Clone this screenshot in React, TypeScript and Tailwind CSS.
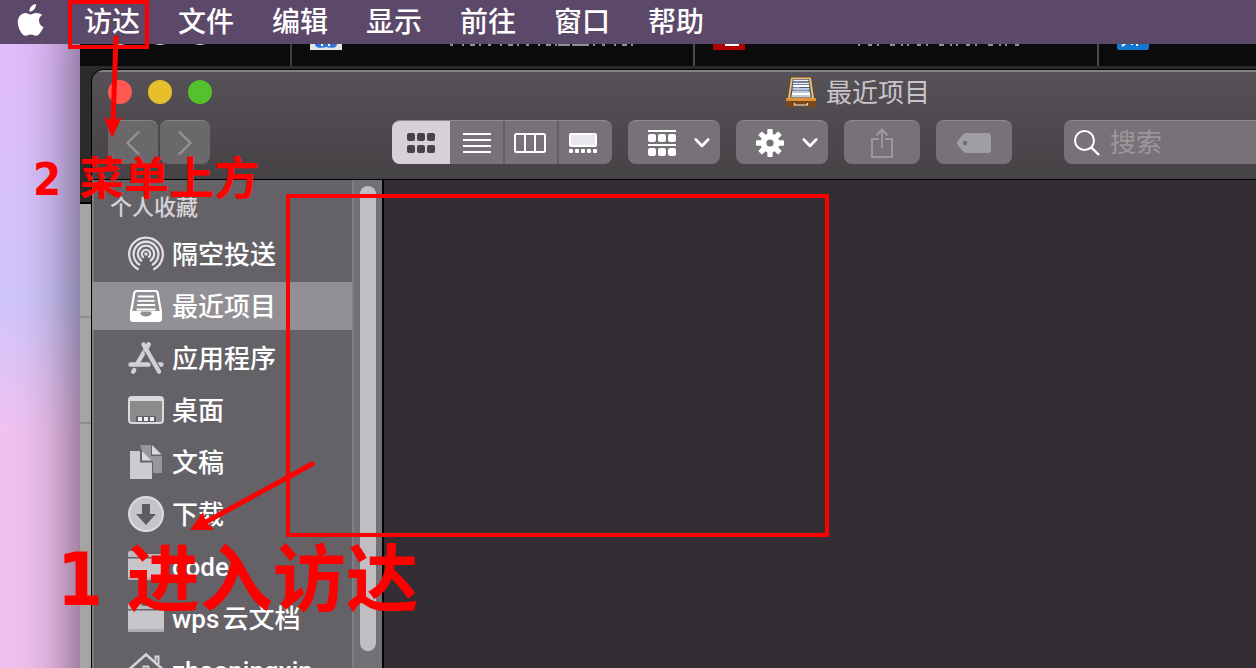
import React from 'react';

type IconProps = { className?: string };

const AppleLogo = () => (
    <svg className="h-8 w-7" viewBox="0 0 28 32" fill="white">
        <path d="M18.9 0c.2 2-.6 3.900-1.700 5.300-1.200 1.400-3 2.400-4.800 2.300-.2-1.900.7-3.900 1.800-5.100C15.300 1.100 17.300.1 18.900 0z" />
        <path d="M25.200 11.100c-2 1.300-3.200 3.100-3.200 5.600 0 3 1.800 5.200 4.400 6.200-.6 1.800-1.500 3.600-2.700 5.200-1.400 2.100-2.800 3.700-4.900 3.700-2 0-2.600-1.200-5-1.200-2.300 0-3.100 1.200-5 1.200-2.200 0-3.600-1.800-5-3.900C2.100 25.500.8 21.900.8 18.300c0-5.700 3.700-9.300 7.600-9.300 2.100 0 3.800 1.400 5.100 1.400 1.200 0 3.200-1.500 5.600-1.500 2.600 0 4.700.9 6.100 2.200z" />
    </svg>
);

const GridIcon = () => (
    <svg className="h-5 w-7" viewBox="0 0 28 20" fill="#474347">
        {[0, 12].map((y) => [0, 10, 20].map((x) => <rect key={`${x}-${y}`} x={x} y={y} width="8" height="8" rx="2" />))}
    </svg>
);

const ListIcon = () => (
    <svg className="h-5 w-7" viewBox="0 0 28 20" fill="white">
        {[0, 6, 12, 18].map((y) => <rect key={y} y={y} width="28" height="2" />)}
    </svg>
);

const ColumnsIcon = () => (
    <svg className="h-5 w-8" viewBox="0 0 32 20" fill="none" stroke="white" strokeWidth="2">
        <rect x="1" y="1" width="30" height="18" rx="1.500" />
        <path d="M11 1v18M21 1v18" />
    </svg>
);

const GalleryIcon = () => (
    <svg className="h-5 w-7" viewBox="0 0 28 20" fill="white">
        <rect x="1" y="1" width="26" height="12" rx="1" fill="#ebe8ed" stroke="white" strokeWidth="2" />
        {[0, 6, 12, 18, 24].map((x) => <rect key={x} x={x} y="16" width="4" height="4" rx="1" />)}
    </svg>
);

const ArrangeIcon = () => (
    <svg className="h-[26px] w-7" viewBox="0 0 28 26" fill="white">
        <rect width="28" height="2" />
        <rect y="14" width="28" height="2" />
        {[4, 18].map((y) => [0, 10, 20].map((x) => <rect key={`${x}-${y}`} x={x} y={y} width="8" height="8" rx="2" />))}
    </svg>
);

const GearIcon = () => (
    <svg className="size-7" viewBox="0 0 28 28" fill="white">
        {[0, 45, 90, 135].map((angle) => (
            <rect key={angle} x="11.300" y="0" width="5.400" height="28" rx="1" transform={`rotate(${angle} 14 14)`} />
        ))}
        <circle cx="14" cy="14" r="9.500" />
        <circle cx="14" cy="14" r="3.600" fill="#767277" />
    </svg>
);

const ChevronDown = () => (
    <svg className="h-[10px] w-4" viewBox="0 0 16 10" fill="none" stroke="white" strokeWidth="2.600" strokeLinecap="round" strokeLinejoin="round">
        <path d="M1.800 1.500 8 8l6.200-6.500" />
    </svg>
);

const BackIcon = () => (
    <svg className="h-6 w-[14px]" viewBox="0 0 14 24" fill="none" stroke="#939094" strokeWidth="2.400" strokeLinecap="round">
        <path d="M12.500 1.200 1.500 12l11 10.800" />
    </svg>
);

const ForwardIcon = () => (
    <svg className="h-6 w-[14px]" viewBox="0 0 14 24" fill="none" stroke="#939094" strokeWidth="2.400" strokeLinecap="round">
        <path d="M1.500 1.200 12.500 12l-11 10.800" />
    </svg>
);

const ShareIcon = () => (
    <svg className="h-[30px] w-[22px]" viewBox="0 0 22 30" fill="none" stroke="#9b989d" strokeWidth="2">
        <path d="M8 11H1v18h20V11h-7M11 20V2M5.500 7.500 11 1.500l5.500 6" />
    </svg>
);

const TagIcon = () => (
    <svg className="h-5 w-[34px]" viewBox="0 0 34 20" fill="#a19ea3">
        <path d="M10 0h21a3 3 0 0 1 3 3v14a3 3 0 0 1-3 3H10c-2 0-3-.7-4.500-2.200L1 12.500c-1.300-1.500-1.300-3.500 0-5l4.500-5.300C7 .7 8 0 10 0z" />
        <circle cx="8" cy="10" r="2.200" fill="#6d6a6e" />
    </svg>
);

const SearchIcon = () => (
    <svg className="size-[26px] shrink-0" viewBox="0 0 26 26" fill="none" stroke="white" strokeWidth="2">
        <circle cx="10.500" cy="10.500" r="9.500" />
        <path d="m17.300 17.300 7.700 7.700" strokeWidth="2.400" />
    </svg>
);

const DrawerIcon = () => (
    <svg className="h-[30px] w-[30px]" viewBox="0 0 30 30">
        <path d="M4.500 0h21l3.500 22H1z" fill="#5b3c17" />
        <path d="M5 .5h20l3 20.500H2z" fill="#eebd73" />
        <path d="M6.800 2h16.400L26 20.500H4z" fill="#4f5a6b" />
        <path d="M7.500 3.500h15M7 6.500h16M6.600 12h16.800M6 15h18M5.500 19h19" stroke="#e8eef7" strokeWidth="1.500" />
        <path d="M6.800 9h16.400M6 17h18" stroke="white" strokeWidth="2" />
        <path d="M8 4.800h5M7.500 10.500h6M7.500 13.500h14" stroke="#7393cf" strokeWidth="1.200" />
        <rect y="21" width="30" height="9" rx="1" fill="#7b4819" />
        <rect y="21" width="30" height="3" fill="#df943c" />
        <path d="M8.500 26v2h13v-2" fill="none" stroke="#eee" strokeWidth="1.200" />
    </svg>
);

const AirdropIcon = ({ className }: IconProps) => (
    <svg className={className} viewBox="0 0 36 36" fill="none" stroke="#e2dfe4" strokeWidth="2.300" strokeLinecap="round">
        <path d="M9.800 33A16.800 16.800 0 1 1 26.200 33" />
        <path d="M11.200 28.500a12.400 12.400 0 1 1 13.600 0" />
        <path d="M13.200 24.500a8.200 8.200 0 1 1 9.600 0" />
        <path d="M15 21a4.200 4.200 0 1 1 6 0" />
        <circle cx="18" cy="18" r="1.800" fill="#e2dfe4" stroke="none" />
    </svg>
);

const RecentIcon = ({ className }: IconProps) => (
    <svg className={className} viewBox="0 0 36 36" fill="none" stroke="white" strokeWidth="2.200">
        <path d="M8.500 3h19c1.200 0 2 .7 2.200 2L33 24H3L6.300 5C6.500 3.700 7.300 3 8.500 3z" />
        <path d="M2 24h9.500c1 3 3.500 4.600 6.500 4.600s5.500-1.600 6.500-4.600H34v7a3 3 0 0 1-3 3H5a3 3 0 0 1-3-3z" fill="white" stroke="none" />
        <path d="M12.600 23.500h10.800c-.8 2.400-2.800 3.800-5.400 3.800s-4.600-1.400-5.400-3.800z" fill="#929094" stroke="none" />
        <path d="M10 8.500h16M9.500 12.800h17M9 17h18M8.500 21.500h19" strokeWidth="1.800" />
    </svg>
);

const ApplicationsIcon = ({ className }: IconProps) => (
    <svg className={className} viewBox="0 0 36 36" fill="none" stroke="#d3d0d5" strokeWidth="4.400" strokeLinecap="round">
        <path d="M2.500 24.500h18M29 24.500h4.500" />
        <path d="M20.500 4.500 9 24" />
        <path d="m6.200 30-1 1.800" />
        <path d="m15.500 4.500 15.500 27" stroke="#656266" strokeWidth="6.500" strokeLinecap="butt" />
        <path d="m15.500 4.500 15.500 27" />
        <path d="M20.500 4.500 17.500 9.500" />
    </svg>
);

const DesktopIcon = ({ className }: IconProps) => (
    <svg className={className} viewBox="0 0 36 36">
        <rect x="1" y="5" width="34" height="26" rx="3" fill="#8d8a8e" stroke="#dcd9de" strokeWidth="2" />
        <path d="M1 8a3 3 0 0 1 3-3h28a3 3 0 0 1 3 3v1H1z" fill="#dcd9de" />
        <rect x="8" y="24" width="20" height="6" fill="#636064" />
        <path d="M10 25h4v4h-4zM16 25h4v4h-4zM22 25h4v4h-4z" fill="#f1eff2" />
    </svg>
);

const DocumentsIcon = ({ className }: IconProps) => (
    <svg className={className} viewBox="0 0 36 36">
        <path d="M12 1h11v11h11v17H22z" fill="#9a979c" />
        <path d="M24 1v9.500h9.500z" fill="#dcd9de" />
        <path d="M1 6h12l12 12v18H1z" fill="#656266" />
        <path d="M2 7h10v11.500h12V35H2z" fill="#cdcad0" />
        <path d="M14 7v9.500h9.500z" fill="#dcd9de" />
    </svg>
);

const DownloadsIcon = ({ className }: IconProps) => (
    <svg className={className} viewBox="0 0 36 36">
        <circle cx="18" cy="18" r="17" fill="#c6c3c9" stroke="#dedbe0" strokeWidth="2" />
        <path d="M14 8h8v10h6L18 29 8 18h6z" fill="#5f5c60" />
    </svg>
);

const FolderIcon = ({ className }: IconProps) => (
    <svg className={className} viewBox="0 0 36 36">
        <path d="M0 5a2 2 0 0 1 2-2h9c2 0 2.500 3 4.500 3H34a2 2 0 0 1 2 2v1H0z" fill="#bcb9be" />
        <path d="M0 10.500h36V30a2 2 0 0 1-2 2H2a2 2 0 0 1-2-2z" fill="#c8c5cb" />
        <path d="M0 29h36v1a2 2 0 0 1-2 2H2a2 2 0 0 1-2-2z" fill="#b1aeb4" />
    </svg>
);

const HomeIcon = ({ className }: IconProps) => (
    <svg className={className} viewBox="0 0 36 36" fill="none" stroke="#d6d3d8" strokeWidth="2.600">
        <path d="M27.500 9V4.500h3V12" strokeWidth="2" />
        <path d="M1 17.500 18 2.500l17 15" />
        <path d="M7 17 18 7.500 29 17v17H7z" fill="#656266" stroke="none" />
        <path d="M15.500 34V14.500h5V34" fill="#656266" strokeWidth="1.800" />
    </svg>
);

const menus = ['访达', '文件', '编辑', '显示', '前往', '窗口', '帮助'];

const places = [
    { label: '隔空投送', icon: AirdropIcon },
    { label: '最近项目', icon: RecentIcon, active: true },
    { label: '应用程序', icon: ApplicationsIcon },
    { label: '桌面', icon: DesktopIcon },
    { label: '文稿', icon: DocumentsIcon },
    { label: '下载', icon: DownloadsIcon },
    { label: 'code', icon: FolderIcon },
    { label: 'wps云文档', icon: FolderIcon },
    { label: 'zhaoningxin', icon: HomeIcon },
];

const toolButton = 'flex h-11 items-center rounded-lg border-t border-[#8e8a8f] bg-[#767277]';

const MenuBar = () => (
    <header className="relative flex h-11 items-center bg-[#5c4868] pl-[17px]">
        <button aria-label="Apple" className="mr-[39px] pb-1"><AppleLogo /></button>
        <nav className="flex gap-[38px] pt-[2px]">
            {menus.map((menu) => (
                <button key={menu} className="text-[28px] leading-10 font-medium whitespace-nowrap text-white">{menu}</button>
            ))}
        </nav>
    </header>
);

// Browser window that sits behind the menu bar and Finder
const BrowserWindow = () => (
    <div className="absolute top-0 right-0 -bottom-20 left-20 flex flex-col bg-[#a5a5a4] shadow-[0_0_60px_rgba(0,0,0,0.65)]">
        <div className="flex h-[66px] shrink-0 items-end bg-[#0b0b0b]">
            <div className="flex h-full w-[210px] shrink-0 items-end gap-4 pb-[21px] pl-7">
                <span className="size-6 rounded-full bg-[#c9c9c9]" />
                <span className="size-6 rounded-full bg-[#c9c9c9]" />
                <span className="size-6 rounded-full bg-[#c9c9c9]" />
            </div>
            <div className="flex h-full w-[403px] shrink-0 items-end border-l-2 border-[#3c3c3c] pb-4 pl-[18px]">
                <svg className="size-8" viewBox="0 0 32 32">
                    <rect width="32" height="32" fill="#e4e4e4" />
                    <path d="M5 26c0 5 9 4 11 3 3 1 11 2 11-3" fill="#2f74de" />
                    <path d="M12 26v2M19 26v2" stroke="white" strokeWidth="2" />
                </svg>
                <svg className="mb-1 ml-[108px] h-1 w-[190px]" viewBox="0 0 190 4" stroke="#8f8f8f" strokeWidth="2">
                    <path d="M0 3h186" strokeDasharray="3 9 2 6 5 4 2 7" />
                    <path d="M108 3h12M122 3h14" />
                </svg>
            </div>
            <div className="flex h-full w-[404px] shrink-0 items-end border-l-2 border-[#4a4a4a] pb-4 pl-[18px]">
                <svg className="size-8" viewBox="0 0 32 32">
                    <rect width="32" height="32" fill="#b00000" />
                    <path d="M12 27h14" stroke="white" strokeWidth="2" />
                </svg>
                <svg className="mb-1 ml-[113px] h-1 w-[166px]" viewBox="0 0 166 4" stroke="#8f8f8f" strokeWidth="2">
                    <path d="M0 3h166" strokeDasharray="2 8 4 5 2 11 5 6 2 4" />
                </svg>
            </div>
            <div className="flex h-full flex-1 items-end border-l-2 border-[#4a4a4a] pb-4 pl-[18px]">
                <svg className="size-8" viewBox="0 0 32 32">
                    <rect width="32" height="32" rx="2" fill="#1477d0" />
                    <path d="m5 28 4-3M14 26h2M20 28v-3" stroke="white" strokeWidth="2" />
                </svg>
            </div>
        </div>
        <div className="h-[138px] shrink-0 border-b-2 border-black bg-[#2b2b2b]" />
        <div className="h-[114px] shrink-0 border-b-2 border-[#8d8d8d]" />
        <div className="h-[106px] shrink-0 border-b-2 border-[#8d8d8d]" />
    </div>
);

const TitleBar = () => (
    <div className="grid h-10 grid-cols-[1fr_auto_1fr] items-center px-4">
        <div className="flex gap-4">
            <button aria-label="关闭" className="size-6 rounded-full bg-[#fe5850]" />
            <button aria-label="最小化" className="size-6 rounded-full bg-[#e6bf2b]" />
            <button aria-label="缩放" className="size-6 rounded-full bg-[#54c22c]" />
        </div>
        <h1 className="flex h-10 items-center gap-[10px] text-[26px] leading-10 text-[#c9c4ca]">
            <DrawerIcon />
            <span className="pt-[2px]">最近项目</span>
        </h1>
    </div>
);

const Toolbar = () => (
    <div className="flex items-center px-4 pt-2 pb-[15px]">
        <div className="flex gap-[2px]">
            <button aria-label="后退" className="flex h-11 w-[50px] items-center justify-center rounded-lg border-t border-[#858286] bg-[#6b686c]"><BackIcon /></button>
            <button aria-label="前进" className="flex h-11 w-[50px] items-center justify-center rounded-lg border-t border-[#858286] bg-[#6b686c]"><ForwardIcon /></button>
        </div>
        <div className="ml-[182px] flex gap-4">
            <div className={`${toolButton} w-[220px] overflow-hidden`}>
                <button aria-label="图标" className="flex h-11 w-[58px] items-center justify-center bg-[#d5d1d7]"><GridIcon /></button>
                <button aria-label="列表" className="flex h-11 w-[53px] items-center justify-center"><ListIcon /></button>
                <button aria-label="分栏" className="flex h-11 w-[54px] items-center justify-center border-l-2 border-[#625e63] pr-[2px]"><ColumnsIcon /></button>
                <button aria-label="画廊" className="flex h-11 flex-1 items-center justify-center border-l-2 border-[#625e63] pr-[6px]"><GalleryIcon /></button>
            </div>
            <button aria-label="排列" className={`${toolButton} w-[92px] justify-between pr-[10px] pl-5`}><ArrangeIcon /><ChevronDown /></button>
            <button aria-label="操作" className={`${toolButton} w-[92px] justify-between pr-[10px] pl-5`}><GearIcon /><ChevronDown /></button>
            <button aria-label="共享" className={`${toolButton} w-[76px] justify-center`}><ShareIcon /></button>
            <button aria-label="标签" className={`${toolButton} w-[76px] justify-center`}><TagIcon /></button>
        </div>
        <label className={`${toolButton} ml-[52px] flex-1 gap-[10px] pl-[10px]`}>
            <SearchIcon />
            <input
                type="search"
                aria-label="搜索"
                placeholder="搜索"
                className="w-full bg-transparent text-[26px] leading-10 text-white outline-none placeholder:text-[#9b989c]"
            />
        </label>
    </div>
);

const Sidebar = () => (
    <aside className="flex w-[292px] shrink-0 overflow-hidden border-r-2 border-black bg-[#656267]">
        <div className="w-[260px] shrink-0 shadow-[inset_2px_0_0_#7c797d]">
            <h2 className="pt-3 pl-[18px] text-[22px] leading-8 font-medium text-[#d6d3d8]">个人收藏</h2>
            <ul className="mt-[6px] flex flex-col gap-1">
                {places.map(({ label, icon: Icon, active }) => (
                    <li key={label} className={active ? 'bg-[#929094]' : ''}>
                        <a href="#" className="flex h-12 items-center gap-2 pl-9 text-[26px] leading-10 font-medium whitespace-nowrap text-white">
                            <Icon className="size-9 shrink-0" />
                            <span className="pt-[2px] [text-autospace:normal]">{label}</span>
                        </a>
                    </li>
                ))}
            </ul>
        </div>
        <div className="flex-1 border-l-2 border-[#817e83] bg-[#737076] pt-[6px] pl-[6px]">
            <div className="h-[calc(100%-17px)] w-4 rounded-full bg-[#c0bdc3]" />
        </div>
    </aside>
);

// The window is wider than the screen and runs off its right edge
const FinderWindow = () => (
    <main className="absolute top-[70px] -right-[368px] bottom-0 left-[92px] flex flex-col overflow-hidden rounded-tl-xl bg-[#332e33] shadow-[0_0_0_1px_black]">
        <div className="shrink-0 border-t-2 border-b border-t-[#858286] border-b-black bg-linear-to-b from-[#565156] to-[#454246]">
            <TitleBar />
            <Toolbar />
        </div>
        <div className="flex min-h-0 flex-1">
            <Sidebar />
            <section className="flex-1" />
        </div>
    </main>
);

const Annotations = () => (
    <div className="pointer-events-none absolute inset-0 text-[#ff0000]">
        <div className="absolute top-0 left-[68px] h-[49px] w-[81px] border-4 border-current" />
        <div className="absolute top-[194px] left-[286px] h-[343px] w-[543px] border-4 border-current" />
        <svg className="absolute top-[34px] left-[100px] h-[106px] w-6" viewBox="0 0 24 106" fill="currentColor">
            <path d="M16 4 13 88" stroke="currentColor" strokeWidth="5" strokeLinecap="round" />
            <path d="M12 104 4 83l9 4 9-4z" />
        </svg>
        <svg className="absolute top-[458px] left-[188px] h-[74px] w-[130px]" viewBox="0 0 130 74" fill="currentColor">
            <path d="M124 6 18 64" stroke="currentColor" strokeWidth="5" strokeLinecap="round" />
            <path d="M2 72 15 54l3 10 8 8z" />
        </svg>
        <p className="absolute top-[150px] left-[33px] flex gap-[18px] text-[45px] leading-[60px] font-bold whitespace-nowrap">
            <span>2</span>
            <span>菜单上方</span>
        </p>
        <p className="absolute top-[535px] left-[57px] flex gap-6 text-[73px] leading-[90px] font-bold whitespace-nowrap">
            <span>1</span>
            <span>进入访达</span>
        </p>
    </div>
);

const App = () => {
    return (
        <div className="relative h-screen overflow-hidden bg-linear-to-b from-[#e6bbfc] via-[#d0c6fc] via-45% to-[#f1c2f1] to-65% font-[Roboto,'Noto_Sans_CJK_SC',sans-serif]">
            <BrowserWindow />
            <FinderWindow />
            <MenuBar />
            <div className="font-['DejaVu_Sans_Condensed','Noto_Sans_CJK_SC',sans-serif]">
                <Annotations />
            </div>
        </div>
    );
};

export default App;
